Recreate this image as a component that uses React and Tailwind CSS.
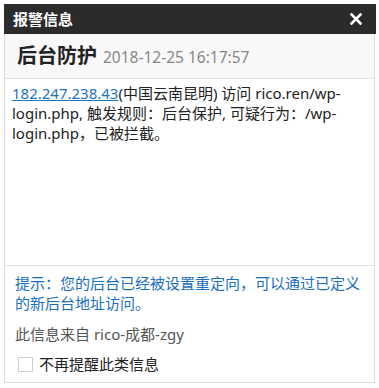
export default function App() {
  const font = { fontFamily: '"Noto Sans", "Noto Sans CJK SC", sans-serif' };
  return (
    <div className="w-[379px] h-[388px] bg-white pt-[4px] pl-[4px]" style={font}>
      <div className="w-[372px] flex flex-col">
        {/* 标题栏 */}
        <div className="h-[30px] bg-[#2b2b2c] flex items-center justify-between pl-[9px] pr-[14px]">
          <span className="text-white text-[15px] font-bold leading-none">报警信息</span>
          <svg width="12" height="12" viewBox="0 0 12 12" className="block">
            <path d="M1.5 1.5 L10.5 10.5 M10.5 1.5 L1.5 10.5" stroke="#fff" strokeWidth="2.6" strokeLinecap="square" />
          </svg>
        </div>

        <div className="w-[371px] border-x border-b border-[#dcdcdc]">
          {/* 事件标题 */}
          <div className="h-[45px] bg-[#f8f8f8] border-b border-[#e2e2e2] flex items-center pl-[12px] gap-[6px]">
            <span className="text-[20px] font-bold text-[#222] leading-none">后台防护</span>
            <span className="text-[15.5px] text-[#888] leading-none mt-[4px]">2018-12-25 16:17:57</span>
          </div>

          {/* 详情 */}
          <div className="h-[186px] bg-white px-[7px] pt-[4px] text-[15px] leading-[20px] text-[#222]">
            <a className="text-[#1e73be] underline">182.247.238.43</a>(中国云南昆明) 访问 rico.ren/wp-login.php, 触发规则：后台保护, 可疑行为：/wp-login.php，已被拦截。
          </div>

          {/* 提示 */}
          <div className="border-t border-[#e2e2e2] px-[10px] pt-[7px] pb-[8px]">
            <p className="text-[15px] leading-[20px] text-[#1a6fc0]">提示：您的后台已经被设置重定向，可以通过已定义的新后台地址访问。</p>
            <p className="mt-[11px] text-[15px] leading-[20px] text-[#555]">此信息来自 rico-成都-zgy</p>
            <label className="mt-[10px] ml-[3px] flex items-center gap-[6px] text-[15px] leading-[20px] text-[#222]">
              <span className="w-[15px] h-[15px] border border-[#cfcfcf] bg-white" />
              不再提醒此类信息
            </label>
          </div>
        </div>
      </div>
    </div>
  );
}
